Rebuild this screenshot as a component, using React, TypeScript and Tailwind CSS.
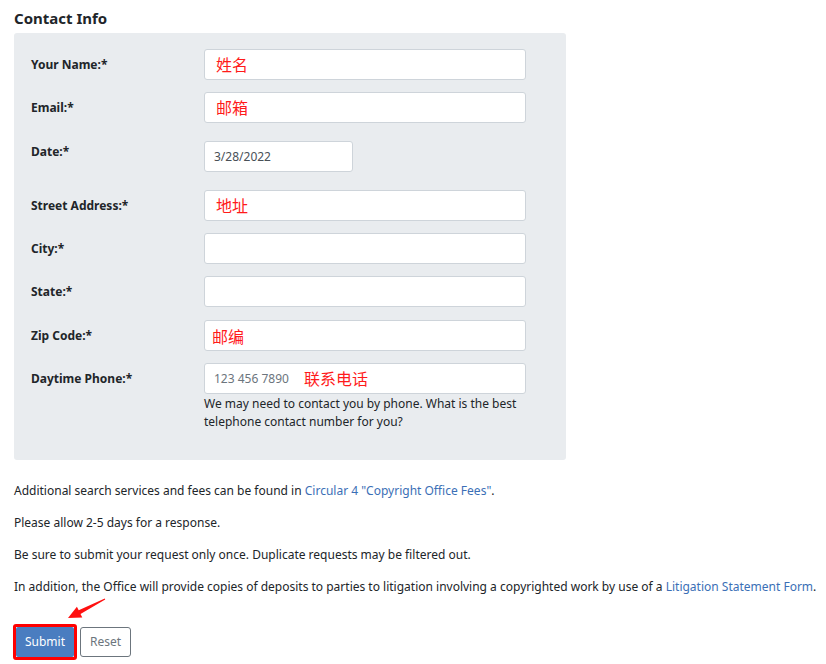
import React from "react";

const font = { fontFamily: '"Noto Sans", "Noto Sans CJK SC", sans-serif' };

function Field({ children, w = "w-[322px]" }: { children?: React.ReactNode; w?: string }) {
  return (
    <div className={`${w} h-[31px] bg-white border border-[#ced4da] rounded-[3px] flex items-center px-[9px] text-[12px] text-[#495057]`}>
      {children}
    </div>
  );
}

function Red({ children, className = "" }: { children: React.ReactNode; className?: string }) {
  return <span className={`text-[#ff1a1a] text-[16px] leading-none ${className}`}>{children}</span>;
}

function Row({ label, children, top = false, className = "" }: { label: string; children: React.ReactNode; top?: boolean; className?: string }) {
  return (
    <div className={`flex ${top ? "items-start" : "items-center"} ${className}`}>
      <div className={`w-[173px] text-[12px] font-bold text-[#212529] ${top ? "leading-5 pt-px" : "pt-px"}`}>{label}</div>
      {children}
    </div>
  );
}

export default function App() {
  return (
    <div className="w-[826px] h-[664px] bg-white px-[14px] pt-[8px] text-[#212529]" style={font}>
      <h2 className="text-[15px] font-bold leading-5 mb-[5px]">Contact Info</h2>

      <div className="w-[552px] h-[427px] bg-[#e9ecef] rounded-[3px] pl-[17px] pt-[16px]">
        <Row label="Your Name:*">
          <Field><Red className="ml-[2px]">姓名</Red></Field>
        </Row>
        <Row label="Email:*" className="mt-[12px]">
          <Field><Red className="ml-[2px]">邮箱</Red></Field>
        </Row>
        <Row label="Date:*" top className="mt-[18px]">
          <Field w="w-[149px]">3/28/2022</Field>
        </Row>
        <Row label="Street Address:*" className="mt-[18px]">
          <Field><Red className="ml-[2px]">地址</Red></Field>
        </Row>
        <Row label="City:*" className="mt-[12px]">
          <Field />
        </Row>
        <Row label="State:*" className="mt-[12px]">
          <Field />
        </Row>
        <Row label="Zip Code:*" className="mt-[13px]">
          <Field><Red className="-ml-[2px] mt-[3px]">邮编</Red></Field>
        </Row>
        <Row label="Daytime Phone:*" className="mt-[12px]">
          <Field>
            <span className="text-[#6c757d]">123 456 7890</span>
            <Red className="ml-[15px]">联系电话</Red>
          </Field>
        </Row>
        <div className="ml-[173px] w-[322px] text-[12px] leading-[18px] mt-px">
          We may need to contact you by phone. What is the best telephone contact number for you?
        </div>
      </div>

      <div className="text-[12px] leading-5 mt-[21px] flex flex-col gap-[12px]">
        <p>
          Additional search services and fees can be found in{" "}
          <a className="text-[#3b6fb6]">Circular 4 "Copyright Office Fees"</a>.
        </p>
        <p>Please allow 2-5 days for a response.</p>
        <p>Be sure to submit your request only once. Duplicate requests may be filtered out.</p>
        <p className="whitespace-nowrap">
          In addition, the Office will provide copies of deposits to parties to litigation involving a copyrighted work by use of a{" "}
          <a className="text-[#3b6fb6]">Litigation Statement Form</a>.
        </p>
      </div>

      <div className="relative flex items-center mt-[27px] -ml-px">
        <div className="border-[3px] border-[#ff0000] rounded-[3px]">
          <button className="w-[58px] h-[30px] bg-[#4a7dc0] text-white text-[12px] rounded-[2px]">Submit</button>
        </div>
        <button className="ml-[3px] w-[51px] h-[30px] border border-[#6c757d] rounded-[3px] bg-white text-[#6c757d] text-[12px]">Reset</button>
        <svg className="absolute left-[50px] -top-[28px]" width="48" height="26" viewBox="0 0 48 26">
          <path d="M5 22 L13.9 10.8 L15.7 14.3 L41.8 2.6 L42.2 3.4 L17.5 17.9 L19.3 21.4 Z" fill="#ff1010" />
        </svg>
      </div>
    </div>
  );
}
